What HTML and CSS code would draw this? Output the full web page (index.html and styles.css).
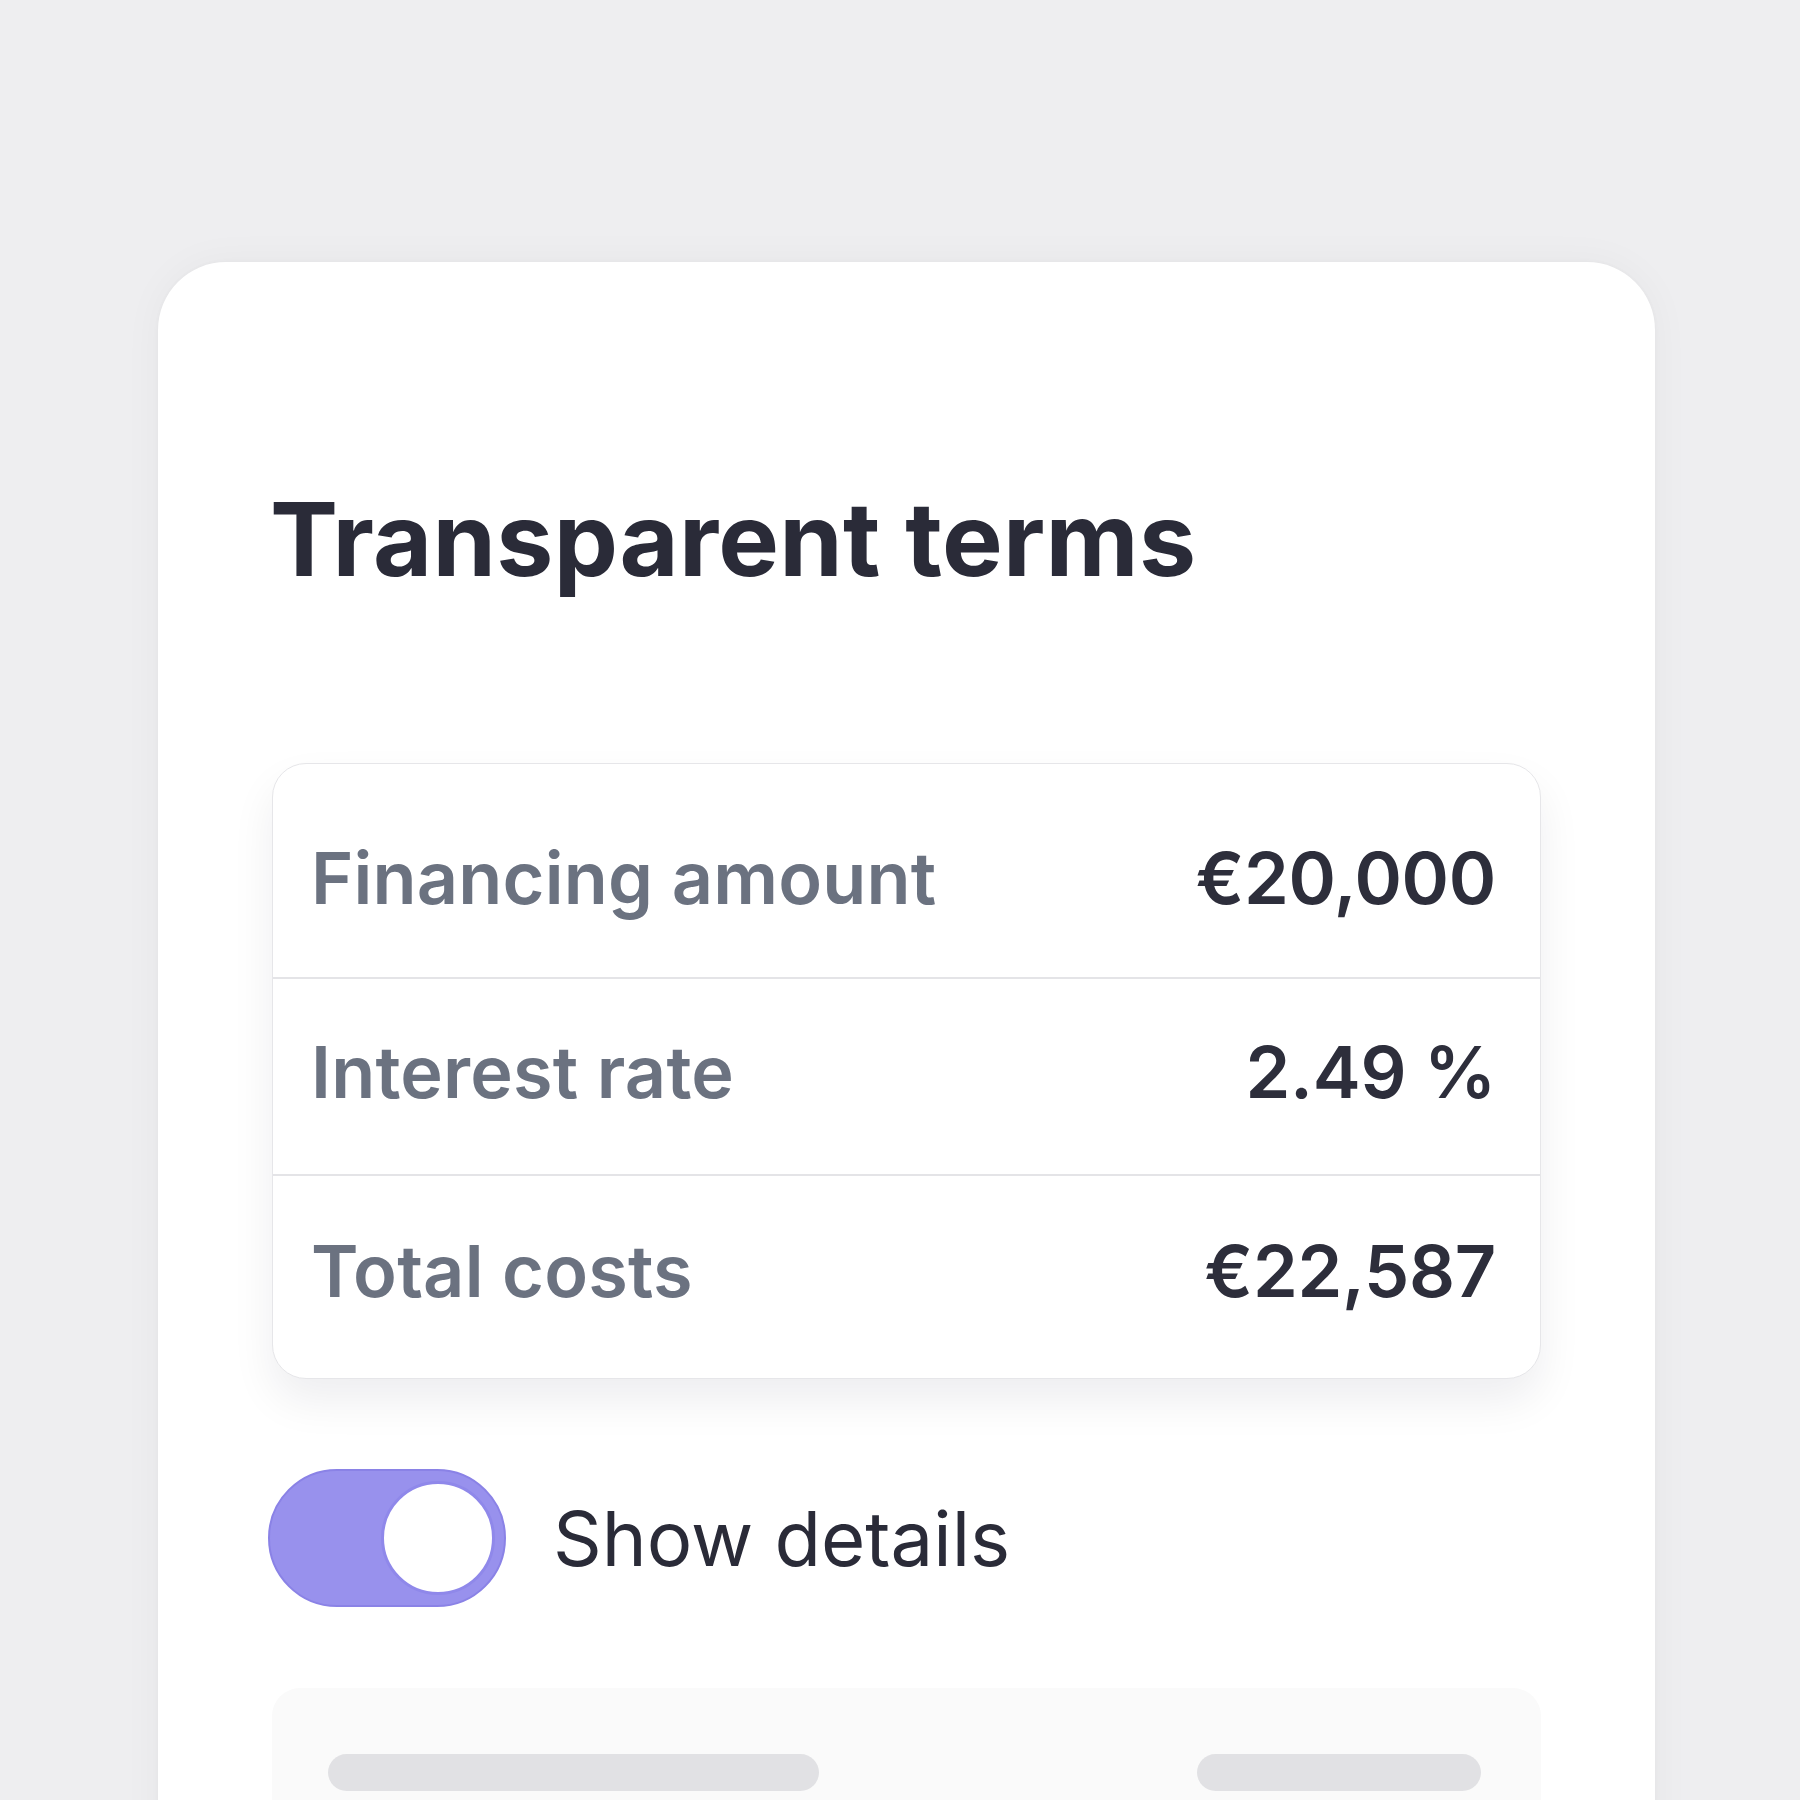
FILE: index.html
```html
<!DOCTYPE html>
<html lang="en">
<head>
<meta charset="utf-8">
<title>Transparent terms</title>
<link rel="stylesheet" href="styles.css">
</head>
<body>
<main class="card">
  <h1 class="title">Transparent terms</h1>
  <section class="terms">
    <div class="row row-first">
      <span class="label">Financing amount</span>
      <span class="value">€20,000</span>
    </div>
    <div class="row row-middle">
      <span class="label">Interest rate</span>
      <span class="value">2.49 %</span>
    </div>
    <div class="row row-last">
      <span class="label">Total costs</span>
      <span class="value">€22,587</span>
    </div>
  </section>
  <div class="toggle-row">
    <span class="toggle"><span class="knob"></span></span>
    <span class="toggle-label">Show details</span>
  </div>
  <section class="details">
    <span class="bar bar-long"></span>
    <span class="bar bar-short"></span>
  </section>
</main>
</body>
</html>
```

FILE: styles.css
```css
html, body {
  margin: 0;
  padding: 0;
}
body {
  background: #eeeef0;
  font-family: Inter, "Noto Sans", "Liberation Sans", sans-serif;
  height: 1800px;
  overflow: hidden;
}
.card {
  margin: 262px 0 0 158px;
  width: 1497px;
  height: 1600px;
  box-sizing: border-box;
  background: #ffffff;
  border-radius: 68px 68px 0 0;
  padding: 216px 114px 0 114px;
  box-shadow: 0 0 40px rgba(0, 0, 0, 0.04), 0 0 4px rgba(0, 0, 0, 0.03);
}
.title {
  margin: 0 0 0 -2px;
  font-size: 102px;
  line-height: 122px;
  font-weight: 700;
  color: #2a2b38;
  letter-spacing: 0.3px;
}
.terms {
  margin-top: 163px;
  border: 1.5px solid #e6e6e9;
  border-radius: 34px;
  background: #fff;
  box-shadow: 0 22px 44px rgba(20, 20, 40, 0.07);
  overflow: hidden;
}
.row {
  display: flex;
  align-items: center;
  justify-content: space-between;
  padding: 0 44px 0 38px;
  box-sizing: border-box;
}
.row-first {
  height: 213px;
  padding-top: 14px;
}
.row-middle {
  height: 197px;
  padding-bottom: 10px;
}
.row-last {
  height: 204px;
  padding-bottom: 14px;
}
.row + .row {
  border-top: 2px solid #e4e4e7;
}
.label {
  font-size: 72px;
  font-weight: 600;
  color: #6b7280;
  letter-spacing: 0.2px;
}
.value {
  font-size: 72px;
  font-weight: 600;
  color: #2d2e3b;
  letter-spacing: -0.3px;
}
.toggle-row {
  margin-top: 90px;
  display: flex;
  align-items: center;
  gap: 47px;
  margin-left: -4px;
}
.toggle {
  width: 238px;
  height: 138px;
  box-sizing: border-box;
  border-radius: 69px;
  background: #9891ed;
  border: 2px solid #8a82e6;
  display: flex;
  align-items: center;
  justify-content: flex-end;
  padding-right: 9px;
}
.knob {
  width: 114px;
  height: 114px;
  box-sizing: border-box;
  border-radius: 50%;
  background: #ffffff;
  border: 3px solid #8f88ea;
}
.toggle-label {
  font-size: 76px;
  font-weight: 400;
  color: #2a2b38;
}
.details {
  margin-top: 81px;
  height: 300px;
  background: #fafafa;
  border-radius: 28px;
  display: flex;
  justify-content: space-between;
  align-items: flex-start;
  padding: 66px 60px 0 56px;
}
.bar {
  display: block;
  height: 37px;
  border-radius: 19px;
  background: #e1e1e4;
}
.bar-long {
  width: 491px;
}
.bar-short {
  width: 284px;
}
```
